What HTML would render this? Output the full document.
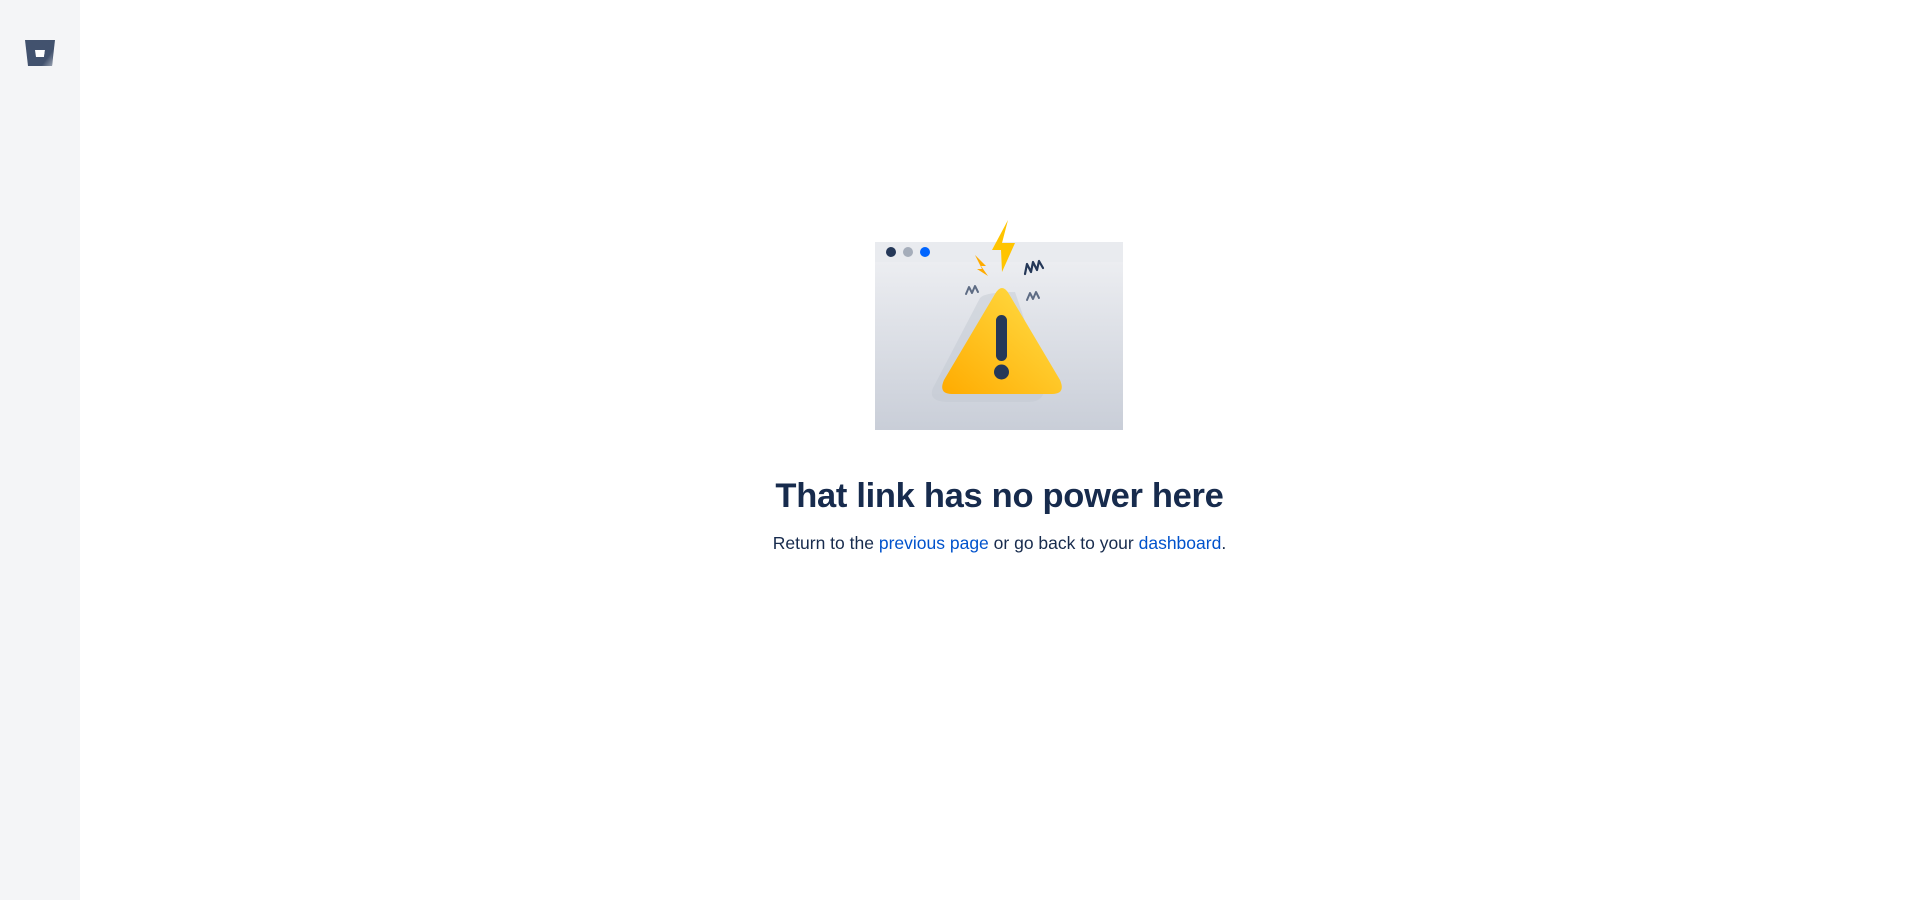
<!DOCTYPE html>
<html><head><style>
body{margin:0;width:1919px;height:900px;background:#fff;font-family:"Liberation Sans",sans-serif;position:relative;overflow:hidden}
.side{position:absolute;left:0;top:0;width:80px;height:900px;background:#f4f5f7}
.logo{position:absolute;left:25px;top:40px}
.ill{position:absolute;left:875px;top:220px}
h1{position:absolute;left:80px;right:0;top:477px;margin:0;text-align:center;font-size:34.5px;font-weight:bold;color:#172b4d;letter-spacing:-0.3px}
p{position:absolute;left:80px;right:0;top:533px;margin:0;text-align:center;font-size:17.5px;color:#172b4d}
a{color:#0052cc;text-decoration:none}
</style></head><body>
<div class="side"><svg class="logo" width="30" height="26" viewBox="0 0 30 26"><defs><linearGradient id="lg" x1="0" y1="0" x2="1" y2="1"><stop offset=".5" stop-color="#42526e"/><stop offset="1" stop-color="#a5adba"/></linearGradient></defs><path d="M0 0H30L27 26H3Z" fill="#42526e"/><path d="M10 10H20L19 17H11Z" fill="#fff"/><path d="M20 10H28L27 26H16L19 17Z" fill="url(#lg)" opacity=".9"/></svg></div>
<svg class="ill" width="250" height="212" viewBox="0 0 250 212">
<defs>
<linearGradient id="bg" x1="0" y1="0" x2="0" y2="1"><stop offset="0" stop-color="#f0f1f4"/><stop offset="1" stop-color="#c9ced8"/></linearGradient>
<linearGradient id="tr" x1="0" y1="1" x2="1" y2="0"><stop offset="0" stop-color="#ffab00"/><stop offset="1" stop-color="#ffe04a"/></linearGradient>
</defs>
<rect x="0" y="22" width="248" height="188" fill="url(#bg)"/>
<rect x="0" y="22" width="248" height="20" fill="#e9ebef"/>
<circle cx="16" cy="32" r="5" fill="#253858"/><circle cx="33" cy="32" r="5" fill="#a5adba"/><circle cx="50" cy="32" r="5" fill="#0065ff"/>
<path d="M105 78Q110 72 140 72L170 160Q172 182 154 182H75Q52 182 58 168Z" fill="#c1c7d0" opacity=".45"/>
<path d="M120 74Q127 62 134 74L185 160Q191 174 177 174H77Q63 174 69 160Z" fill="url(#tr)"/>
<rect x="121" y="95" width="11" height="46" rx="5.5" fill="#253858"/>
<circle cx="126.5" cy="152" r="7.5" fill="#253858"/>
<path d="M133 0L127 23H140L127 52L126 30H117Z" fill="#ffc400"/>
<path d="M100 35L111 46H106L113 56L102 49H107Z" fill="#ffab00"/>
<path d="M150 54L152 44L156 52L158 42L162 50L164 41L168 48" fill="none" stroke="#253858" stroke-width="2.2" stroke-linecap="round" stroke-linejoin="round"/>
<path d="M91 74L94 67L97 73L100 66L103 72" fill="none" stroke="#5e6c84" stroke-width="2" stroke-linecap="round" stroke-linejoin="round"/>
<path d="M152 80L155 73L158 79L161 72L164 78" fill="none" stroke="#5e6c84" stroke-width="2" stroke-linecap="round" stroke-linejoin="round"/>
</svg>
<h1>That link has no power here</h1>
<p>Return to the <a>previous page</a> or go back to your <a>dashboard</a>.</p>
</body></html>
